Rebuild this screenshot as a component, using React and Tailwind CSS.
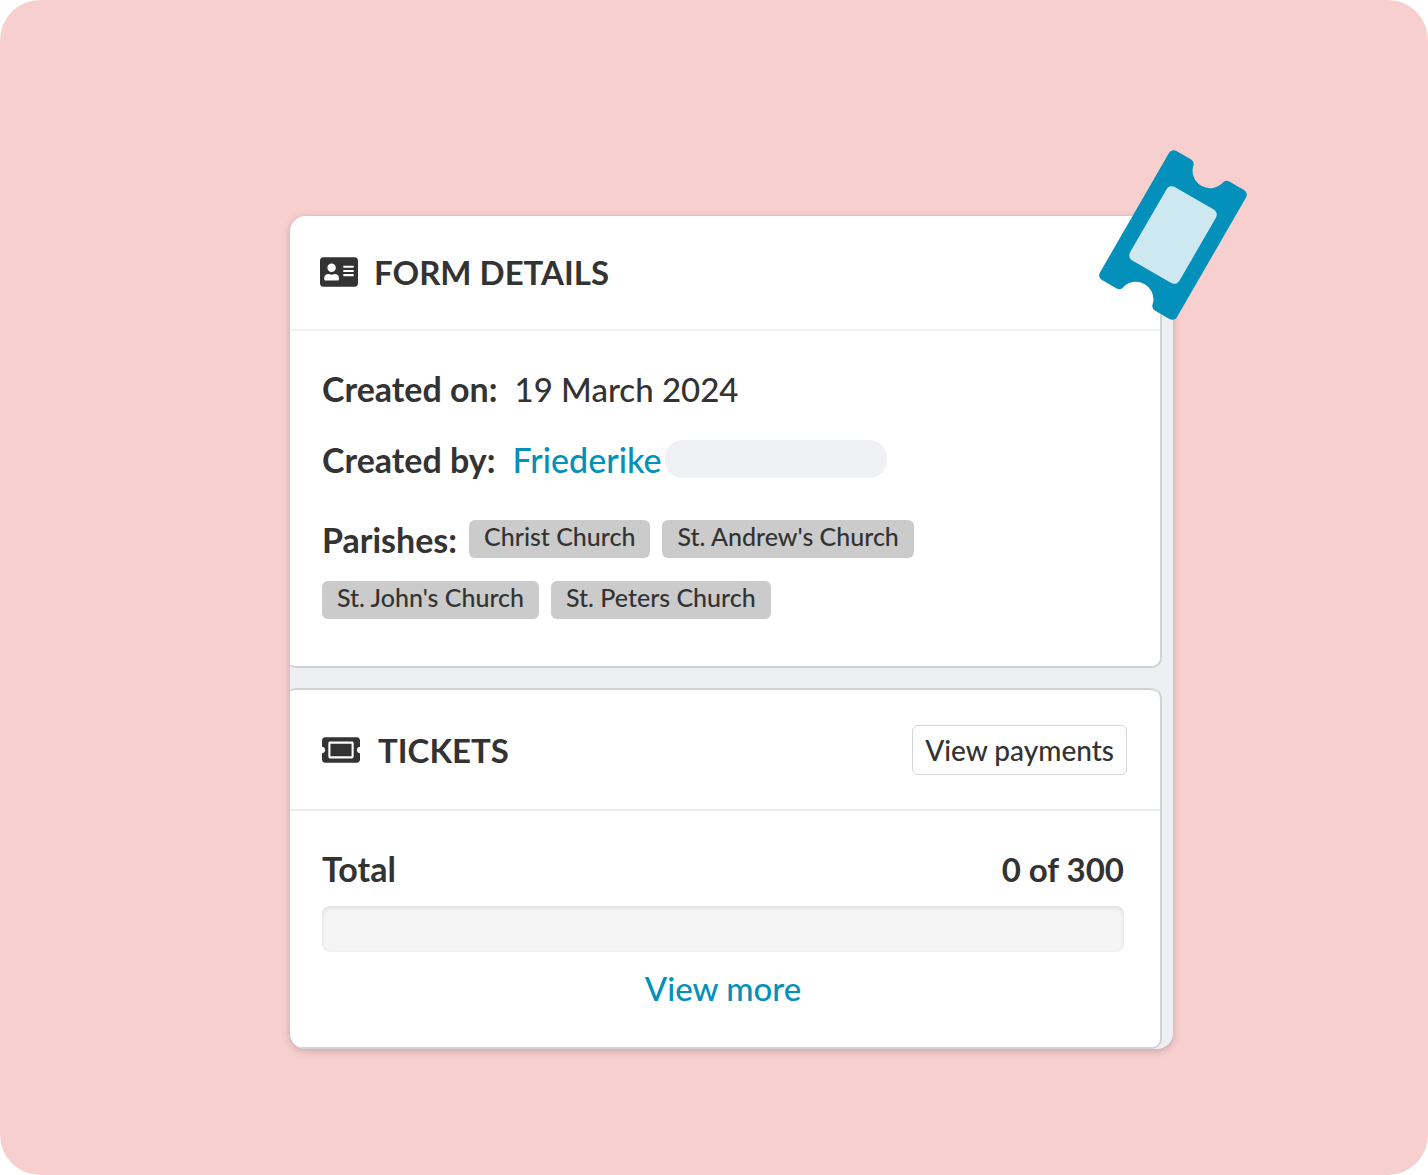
import { FaAddressCard, FaTicketAlt } from 'react-icons/fa';

const parishes = ['Christ Church', "St. Andrew's Church", "St. John's Church", 'St. Peters Church'];

function TicketBadge() {
  return (
    <svg
      className="absolute -top-[66px] -right-[74px] h-[170px] w-[148px]"
      viewBox="-74 -85 148 170"
      aria-hidden="true"
    >
      <g transform="rotate(30)">
        <path
          fill="#0390ba"
          d="M-39-74.5H-22.5Q-18.4-74.5-17.2-71A17.5 17.5 0 0 0 17.2-71Q18.4-74.5 22.5-74.5H39A5.5 5.5 0 0 1 44.5-69V69A5.5 5.5 0 0 1 39 74.5H22.5Q18.4 74.5 17.2 71A17.5 17.5 0 0 0-17.2 71Q-18.4 74.5-22.5 74.5H-39A5.5 5.5 0 0 1-44.5 69V-69A5.5 5.5 0 0 1-39-74.5Z"
        />
        <rect x="-28.5" y="-42.5" width="57" height="85" rx="6" fill="#cde8f0" />
      </g>
    </svg>
  );
}

function Card({ children }) {
  return (
    <section className="-ml-1 mr-[11px] rounded-[10px] border-r-2 border-b-2 border-[#d0d3d5] bg-white">
      {children}
    </section>
  );
}

export default function App() {
  return (
    <main className="min-h-screen rounded-[40px] bg-[#f7cfcf] pt-[216px] pr-[255px] pb-[126px] pl-[290px] font-['Lato',sans-serif] text-[34px] leading-[40px] font-medium text-[#333333]">
      <div className="relative">
        <div className="flex flex-col gap-5 overflow-hidden rounded-2xl bg-[#eeeff2] shadow-[0_2px_8px_rgba(0,0,0,0.2)]">
          <Card>
            <header className="flex items-center gap-4 border-b-2 border-[#f1f2f3] px-[34px] pt-9 pb-[37px]">
              <FaAddressCard className="h-[34px] w-[38px]" />
              <h2 className="text-[33px] font-bold">FORM DETAILS</h2>
            </header>
            <div className="px-9 pt-[38px] pb-[47px]">
              <p className="flex gap-[17px]">
                <b>Created on:</b>
                <span className="text-[33px]">19 March 2024</span>
              </p>
              <p className="mt-[31px] flex gap-[17px]">
                <b>Created by:</b>
                <span className="flex gap-1">
                  <a href="#" className="text-[#0390ba]">Friederike</a>
                  <span className="h-[38px] w-[222px] rounded-[18px] bg-[#f0f1f5]" />
                </span>
              </p>
              <div className="mt-10 flex max-w-[640px] flex-wrap gap-x-3 gap-y-[21px]">
                <b>Parishes:</b>
                {parishes.map((name) => (
                  <span key={name} className="h-[38px] rounded-md bg-[#cbcbcb] px-[15px] text-[25px] leading-[32px]">
                    {name}
                  </span>
                ))}
              </div>
            </div>
          </Card>

          <Card>
            <header className="flex items-center gap-[18px] rounded-t-[10px] border-t-2 border-b-2 border-t-[#d0d3d5] border-b-[#ebeced] pt-[35px] pr-[33px] pb-[34px] pl-9">
              <FaTicketAlt className="h-[34px] w-[38px]" />
              <h2 className="text-[33px] font-bold">TICKETS</h2>
              <button
                type="button"
                className="ml-auto h-[50px] rounded-md border border-[#d4d4d5] px-3 text-[28px]"
              >
                View payments
              </button>
            </header>
            <div className="px-9 pt-[38px] pb-[39px]">
              <p className="flex justify-between font-bold">
                <span>Total</span>
                <span className="text-[33px]">0 of 300</span>
              </p>
              <div
                role="progressbar"
                aria-label="Tickets sold"
                aria-valuenow={0}
                aria-valuemax={300}
                className="mt-[17px] mb-4 h-[46px] rounded-lg bg-[#f5f5f5] shadow-[inset_0_2px_4px_rgba(0,0,0,0.1)]"
              />
              <a href="#" className="block text-center text-[33px] text-[#0390ba]">View more</a>
            </div>
          </Card>
        </div>
        <TicketBadge />
      </div>
    </main>
  );
}
